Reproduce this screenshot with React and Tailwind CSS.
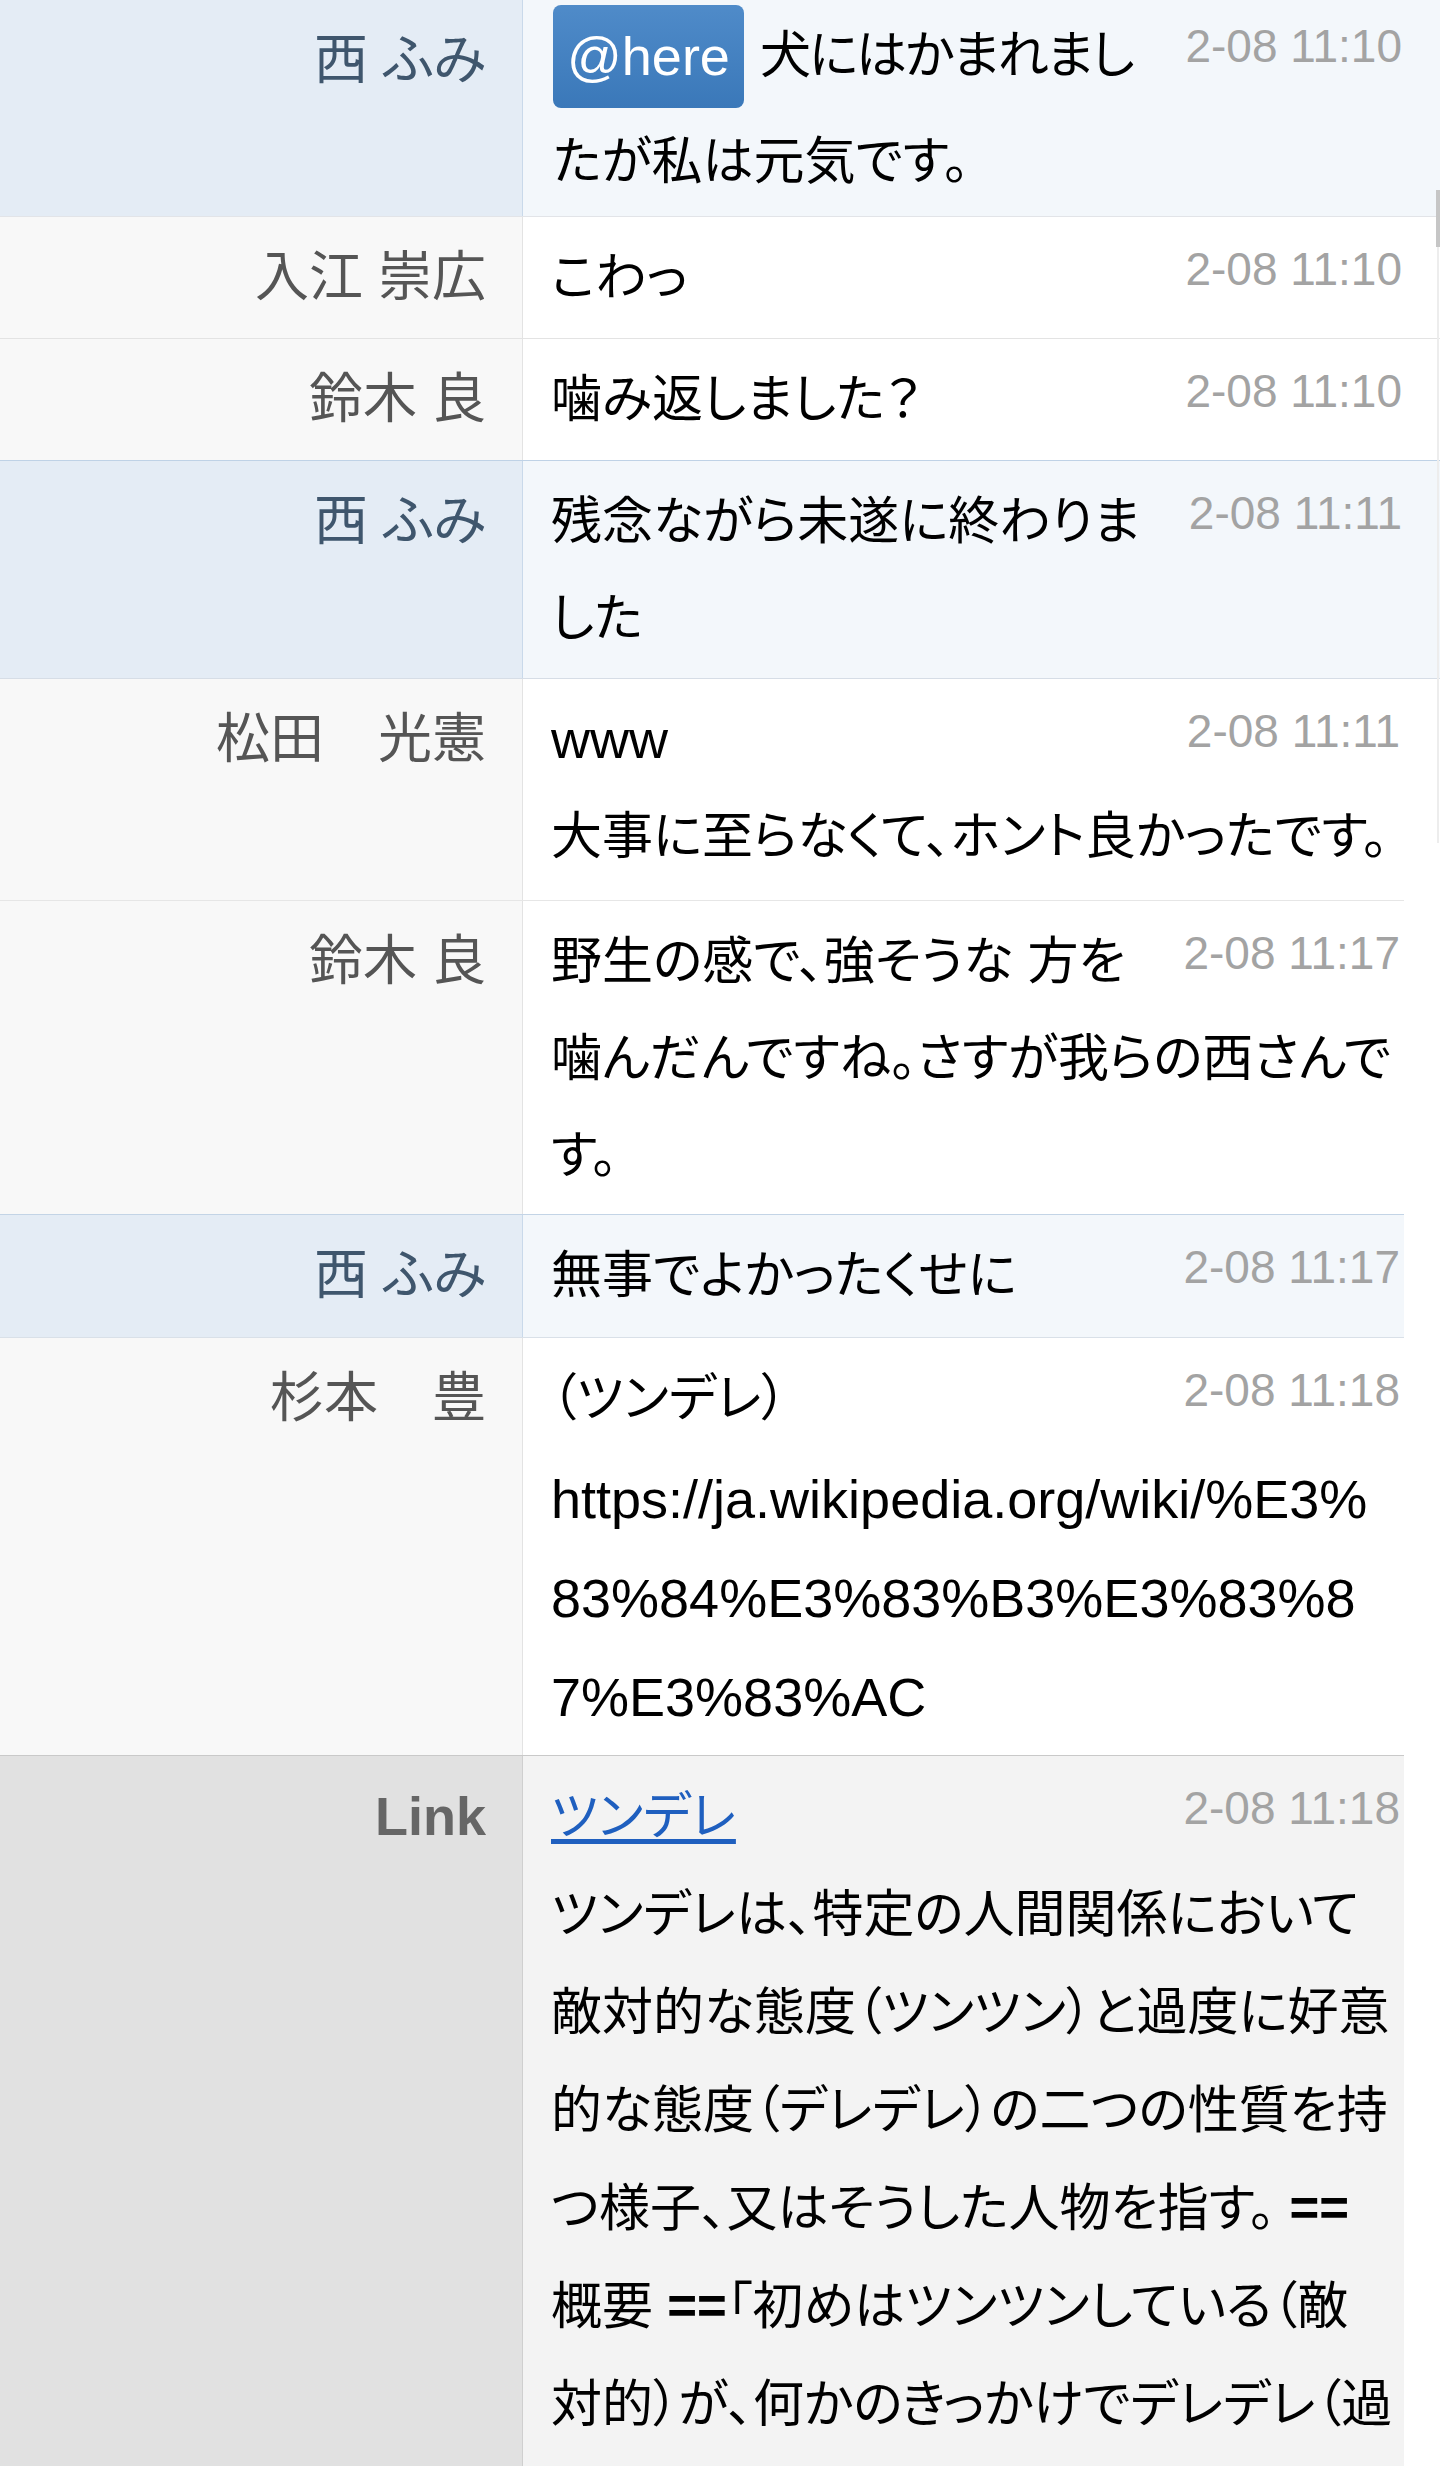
import React from "react";

const FONT = "font-['Liberation_Sans','Noto_Sans_CJK_JP',sans-serif] [font-feature-settings:'palt']";

function Stamp({ children }) {
  return (
    <div className="shrink-0 text-[46px] leading-[80px] text-[#a3a3a3] font-['Liberation_Sans',sans-serif] [font-feature-settings:normal]">
      {children}
    </div>
  );
}

const NAME = "w-[523px] shrink-0 border-r pt-[12px] pr-[36px] text-right text-[54px] leading-[97px] whitespace-pre";
const BODY = "min-w-0 flex-1 pl-[28px] pt-[12px]";
const LINE = "h-[97px] leading-[97px] whitespace-nowrap";

export default function App() {
  return (
    <div className={`relative w-[1440px] h-[2466px] overflow-hidden bg-white text-[51px] text-black ${FONT}`}>
      {/* Row 1 */}
      <div className="flex border-b border-[#e2e4e8]">
        <div className={`${NAME} border-[#c9d9ea] bg-[#e4ecf5] text-[#3f566d]`}>西 ふみ</div>
        <div className="min-w-0 flex-1 bg-[#f3f7fb] pl-[30px] pr-[38px] pt-[5px]">
          <div className="flex items-start justify-between">
            <div className="flex h-[103px] items-center whitespace-nowrap">
              <span className="inline-flex h-[103px] items-center rounded-[8px] bg-gradient-to-b from-[#4f8bc9] to-[#3a78b9] px-[14px] text-[54px] text-white font-['Liberation_Sans',sans-serif]">
                @here
              </span>
              <span className="ml-[16px] tracking-[-2px]">犬にはかまれまし</span>
            </div>
            <div className="pt-[1px]">
              <Stamp>2-08 11:10</Stamp>
            </div>
          </div>
          <div className="h-[108px] leading-[108px] whitespace-nowrap">たが私は元気です。</div>
        </div>
      </div>

      {/* Row 2 */}
      <div className="flex border-b border-[#e3e3e3]">
        <div className={`${NAME} pb-[12px] border-[#e3e3e3] bg-[#f8f8f8] text-[#555]`}>入江 崇広</div>
        <div className={`${BODY} bg-white pr-[38px] pb-[12px]`}>
          <div className="flex items-start justify-between">
            <div className={LINE}>こわっ</div>
            <Stamp>2-08 11:10</Stamp>
          </div>
        </div>
      </div>

      {/* Row 3 */}
      <div className="flex border-b border-[#bfd2e6]">
        <div className={`${NAME} pb-[12px] border-[#e3e3e3] bg-[#f8f8f8] text-[#555]`}>鈴木 良</div>
        <div className={`${BODY} bg-white pr-[38px] pb-[12px]`}>
          <div className="flex items-start justify-between">
            <div className={LINE}>噛み返しました？</div>
            <Stamp>2-08 11:10</Stamp>
          </div>
        </div>
      </div>

      {/* Row 4 */}
      <div className="flex border-b border-[#d6dde6]">
        <div className={`${NAME} pb-[11px] border-[#c9d9ea] bg-[#e4ecf5] text-[#3f566d]`}>西 ふみ</div>
        <div className={`${BODY} bg-[#f3f7fb] pr-[38px] pb-[11px]`}>
          <div className="flex items-start justify-between">
            <div className={LINE}>残念ながら未遂に終わりま</div>
            <Stamp>2-08 11:11</Stamp>
          </div>
          <div className={LINE}>した</div>
        </div>
      </div>

      {/* Row 5 */}
      <div className="flex w-[1404px] border-b border-[#e6e6e6]">
        <div className={`${NAME} pb-[15px] border-[#e3e3e3] bg-[#f8f8f8] text-[#555]`}>松田　光憲</div>
        <div className={`${BODY} bg-white pr-[4px] pb-[15px]`}>
          <div className="flex items-start justify-between">
            <div className={`${LINE} text-[54px] font-['Liberation_Sans',sans-serif]`}>www</div>
            <Stamp>2-08 11:11</Stamp>
          </div>
          <div className={LINE}>大事に至らなくて、ホント良かったです。</div>
        </div>
      </div>

      {/* Row 6 */}
      <div className="flex w-[1404px] border-b border-[#c3d4e6]">
        <div className={`${NAME} pb-[10px] border-[#e3e3e3] bg-[#f8f8f8] text-[#555]`}>鈴木 良</div>
        <div className={`${BODY} bg-white pr-[4px] pb-[10px]`}>
          <div className="flex items-start justify-between">
            <div className="h-[97px] leading-[97px] whitespace-pre">野生の感で、強そうな 方を</div>
            <Stamp>2-08 11:17</Stamp>
          </div>
          <div className={LINE}>噛んだんですね。さすが我らの西さんで</div>
          <div className={LINE}>す。</div>
        </div>
      </div>

      {/* Row 7 */}
      <div className="flex w-[1404px] border-b border-[#d9e0e8]">
        <div className={`${NAME} pb-[13px] border-[#c9d9ea] bg-[#e4ecf5] text-[#3f566d]`}>西 ふみ</div>
        <div className={`${BODY} bg-[#f3f7fb] pr-[4px] pb-[13px]`}>
          <div className="flex items-start justify-between">
            <div className={LINE}>無事でよかったくせに</div>
            <Stamp>2-08 11:17</Stamp>
          </div>
        </div>
      </div>

      {/* Row 8 */}
      <div className="flex w-[1404px] border-b border-[#c9c9c9]">
        <div className={`${NAME} pb-[8px] border-[#e3e3e3] bg-[#f8f8f8] text-[#555]`}>杉本　豊</div>
        <div className={`${BODY} bg-white pr-[4px] pb-[8px]`}>
          <div className="flex items-start justify-between">
            <div className="h-[100px] leading-[97px] whitespace-nowrap">（ツンデレ）</div>
            <Stamp>2-08 11:18</Stamp>
          </div>
          <div className="h-[99px] leading-[99px] whitespace-nowrap text-[54px]">https://ja.wikipedia.org/wiki/%E3%</div>
          <div className="h-[99px] leading-[99px] whitespace-nowrap text-[54px]">83%84%E3%83%B3%E3%83%8</div>
          <div className="h-[99px] leading-[99px] whitespace-nowrap text-[54px]">7%E3%83%AC</div>
        </div>
      </div>

      {/* Row 9 */}
      <div className="flex w-[1404px]">
        <div className={`${NAME} pb-[12px] border-[#cfcfcf] bg-[#e1e1e1] font-bold text-[#666] font-['Liberation_Sans',sans-serif]`}>Link</div>
        <div className={`${BODY} bg-[#f3f3f3] pr-[4px] pb-[12px]`}>
          <div className="flex items-start justify-between">
            <div className="h-[98px] leading-[97px] whitespace-nowrap">
              <a className="text-[#1f5fbf] underline underline-offset-[5px]">ツンデレ</a>
            </div>
            <Stamp>2-08 11:18</Stamp>
          </div>
          <div className="h-[98px] leading-[98px] whitespace-nowrap">ツンデレは、特定の人間関係において</div>
          <div className="h-[98px] leading-[98px] whitespace-nowrap">敵対的な態度（ツンツン）と過度に好意</div>
          <div className="h-[98px] leading-[98px] whitespace-nowrap">的な態度（デレデレ）の二つの性質を持</div>
          <div className="h-[98px] leading-[98px] whitespace-pre">つ様子、又はそうした人物を指す。 <b>==</b></div>
          <div className="h-[98px] leading-[98px] whitespace-pre">概要 <b>==</b>「初めはツンツンしている（敵</div>
          <div className="h-[98px] leading-[98px] whitespace-nowrap">対的）が、何かのきっかけでデレデレ（過</div>
        </div>
      </div>

      {/* scrollbar */}
      <div className="absolute right-0 top-[190px] h-[57px] w-[4px] bg-[#c6c6c6]" />
      <div className="absolute right-[1px] top-[247px] h-[596px] w-[2px] bg-[#ededed]" />
    </div>
  );
}
